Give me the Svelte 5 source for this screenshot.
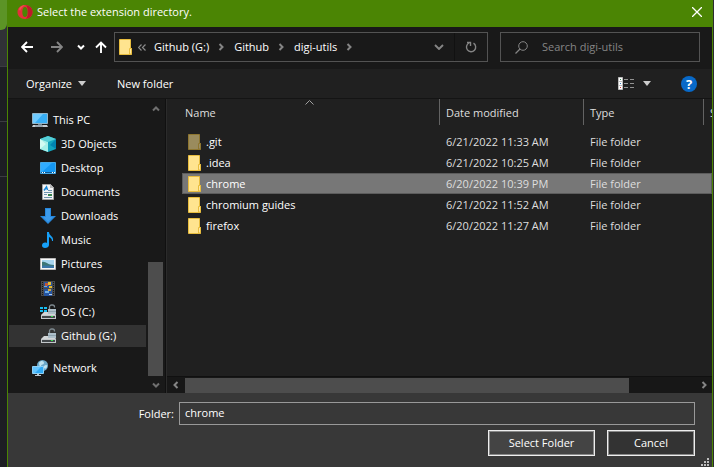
<script>
  let folder = $state('chrome');
  let search = $state('');
  let selected = $state('chrome');

  const crumbs = ['Github (G:)', 'Github', 'digi-utils'];

  const places = [
    { name: 'This PC', icon: 'pc', root: true },
    { name: '3D Objects', icon: 'cube' },
    { name: 'Desktop', icon: 'desktop' },
    { name: 'Documents', icon: 'doc' },
    { name: 'Downloads', icon: 'down' },
    { name: 'Music', icon: 'music' },
    { name: 'Pictures', icon: 'picture' },
    { name: 'Videos', icon: 'video' },
    { name: 'OS (C:)', icon: 'osdrive' },
    { name: 'Github (G:)', icon: 'drive', current: true },
    { name: 'Network', icon: 'network', root: true, apart: true }
  ];

  const files = [
    { name: '.git', date: '6/21/2022 11:33 AM', hidden: true },
    { name: '.idea', date: '6/21/2022 10:25 AM' },
    { name: 'chrome', date: '6/20/2022 10:39 PM' },
    { name: 'chromium guides', date: '6/21/2022 11:52 AM' },
    { name: 'firefox', date: '6/20/2022 11:27 AM' }
  ];

  function pick(name) {
    selected = name;
    folder = name;
  }
</script>

{#snippet folderIcon(dim)}
  <svg class="folder" class:dim width="13" height="16" viewBox="0 0 13 16" aria-hidden="true">
    <path d="M.5.5h11v9h1v6H.5z" fill="#ffe48f" stroke="#e8bd3e" />
    <path d="M10.500 15V9.500h2V15z" fill="#ffe9a3" stroke="#e8bd3e" />
  </svg>
{/snippet}

{#snippet chevron(dir)}
  <svg class="chev to-{dir}" width="8" height="8" viewBox="0 0 8 8" aria-hidden="true">
    <path d="M1 2.500 4 5.500 7 2.500" fill="none" stroke="currentColor" stroke-width="2" />
  </svg>
{/snippet}

{#snippet driveBody()}
  <path d="M9.500 5V2.500a2 2 0 0 1 2-2h1a2 2 0 0 1 2 2V3" fill="none" stroke="#7f8a90" stroke-width="1.300" transform="translate(0 .5)" />
  <path d="M4 8h10l2 3H1z" fill="#d3d6d8" />
  <path d="M8 5h8v5H8z" fill="#aebfc9" />
  <path d="M8 7h8v1H8z" fill="#8fa3ae" />
  <path d="M1 11h15v4H1z" fill="#c3c7ca" />
  <path d="M2 12h13v2H2z" fill="#43484b" />
  <path d="M11 12h2v1h-2z" fill="#35e04c" />
{/snippet}

{#snippet placeIcon(kind)}
  <svg width="16" height="16" viewBox="0 0 16 16" aria-hidden="true">
    {#if kind === 'pc'}
      <path d="M.5 1.500h15v10H.5z" fill="#37aef5" stroke="#91b5c9" />
      <path d="M1 2h10L3 11H1z" fill="#6fcbff" />
      <path d="M6 12h4v1H6z" fill="#6f8491" />
      <path d="M1 13h14l1 2H0z" fill="#c5ccd3" />
      <path d="M3 14h8" stroke="#70818d" />
    {:else if kind === 'cube'}
      <path d="M8 0l8 3v10l-8 3-8-3V3z" fill="#12a4bd" />
      <path d="M0 3l8-3 8 3-8 3z" fill="#56cfd6" />
      <path d="M0 3l8 3v10l-8-3z" fill="#a6f0e8" />
      <path d="M0 3l6 5-6 5z" fill="#d2fbf2" />
      <path d="M16 3l-6 6 6 4z" fill="#0083b0" />
    {:else if kind === 'desktop'}
      <path d="M.5 2.500h15v11H.5z" fill="#1497f2" stroke="#46a9e6" />
      <path d="M1 3h11L2 12H1z" fill="#30acff" />
      <path d="M1 12h14v1H1z" fill="#0c5792" />
      <path d="M2 12.500h1m1 0h1m7 0h1m1 0h1" stroke="#fff" />
    {:else if kind === 'doc'}
      <path d="M2.500.5h8l3 3v12h-11z" fill="#f5f5f5" stroke="#a3a3a3" />
      <path d="M10 0v4h4z" fill="#b7b7b7" />
      <path d="M4 6.500 6.500 3l1 3" fill="none" stroke="#1687d9" stroke-width="1.500" />
      <path d="M8 6.500h4M4 8.500h8M4 13.500h8" stroke="#6d93ae" />
      <path d="M4 10.500h3" stroke="#6d93ae" />
      <path d="M8 10h4v2H8z" fill="#35814c" />
    {:else if kind === 'down'}
      <path d="M5 0h6v8h5l-8 8-8-8h5z" fill="#2787dc" />
      <path d="M6 1h4v8h3l-5 5-5-5h3z" fill="#3c9bea" />
    {:else if kind === 'music'}
      <path d="M7 0h2c0 4 5 4 4 9h-1c0-2-1-3-3-4v8c0 2-2 3-4 3s-3-1-3-2.500C2 11 4.500 10 7 11z" fill="#16a0f8" />
    {:else if kind === 'picture'}
      <path d="M.5 2.500h15v11H.5z" fill="#f7f7f7" stroke="#b8b8b8" />
      <path d="M2 4h12v8H2z" fill="#a8d5ef" />
      <path d="M2 6c4-1 5 3 12 3v3H2z" fill="#3d7778" />
      <path d="M2 10c4-1 8 0 12 0v2H2z" fill="#3a76a9" />
    {:else if kind === 'video'}
      <path d="M1 1h14v15H1z" fill="#4a4a4a" />
      <path d="M2.500 2v14M13.500 2v14" stroke="#151515" stroke-dasharray="1 1" stroke-width="1" />
      <path d="M4 2h8v6H4zM4 9h8v7H4z" fill="#2554a0" />
      <path d="M5 3h3v3H5z" fill="#bc573c" />
      <path d="M8 2h3v3H8zM9 6h3v2H9z" fill="#e7b92c" />
      <path d="M4 6h3v1H4zM5 11h4v2H5z" fill="#6dabe3" />
      <path d="M8 9h3v2H8z" fill="#d7a83b" />
      <path d="M9 14h3v1H9z" fill="#b3cdec" />
    {:else if kind === 'osdrive'}
      {@render driveBody()}
      <path d="M0 3h3v2H0zM4 3h3v2H4zM0 6h3v2H0zM4 6h3v2H4z" fill="#16bdf2" />
    {:else if kind === 'drive'}
      {@render driveBody()}
    {:else}
      <circle cx="10.500" cy="5.500" r="5.500" fill="#6ca9c9" />
      <path d="M7 3c2-3 5-2 5 0s-3 1-3 3-2 0-2-3zM12 6c2-2 4-1 3 1s-2 2-3 1z" fill="#bfe3ef" />
      <path d="M.5 6.500h11v7H.5z" fill="#2fa9f4" stroke="#90d1f5" />
      <path d="M1 7h8l-6 6H1z" fill="#63c4ff" />
      <path d="M5 14h2v1h2v1H3v-1h2z" fill="#bcc8d0" />
    {/if}
  </svg>
{/snippet}

<div class="screen">
  <div class="behind left"><i class="tab"></i><i class="bar"></i><i class="box"></i><i class="box"></i></div>

  <main class="dialog">
    <header class="title">
      <svg width="16" height="16" viewBox="0 0 16 16" aria-hidden="true">
        <path fill-rule="evenodd" d="M8 1c4.500 0 7.500 3 7.500 7s-3 7-7.500 7S.5 12 .5 8 3.500 1 8 1zm0 2C6.400 3 5.300 5 5.300 8s1.100 5 2.700 5 2.700-2 2.700-5S9.600 3 8 3z" fill="#e4303a" />
        <path d="M9 1.200c4 .4 6.500 3.300 6.500 6.800S13 14.400 9 14.800c2.600-3 2.600-10.600 0-13.600z" fill="#bd1a2a" />
        <path d="M2 5c1.500-3 4-4 6-4-2.500 1.500-4 3.500-5 6z" fill="#f3504e" />
      </svg>
      <h1>Select the extension directory.</h1>
      <button class="close" aria-label="Close">
        <svg width="10" height="10" viewBox="0 0 10 10"><path d="M0 0l10 10M10 0 0 10" stroke="#fff" stroke-width="1.300" /></svg>
      </button>
    </header>

    <div class="address">
      <div class="travel">
        <button aria-label="Back"><svg width="12" height="12" viewBox="0 0 12 12"><path d="M12 6H1.500M6 1 1 6l5 5" fill="none" stroke="#fff" stroke-width="1.900" /></svg></button>
        <button aria-label="Forward"><svg width="12" height="12" viewBox="0 0 12 12"><path d="M0 6h10.500M6 1l5 5-5 5" fill="none" stroke="#858585" stroke-width="1.900" /></svg></button>
        <button class="recent" aria-label="Recent locations">{@render chevron('down')}</button>
        <button aria-label="Up"><svg width="12" height="12" viewBox="0 0 12 12"><path d="M6 12V1.500M1 6.500l5-5 5 5" fill="none" stroke="#fff" stroke-width="1.900" /></svg></button>
      </div>
      <div class="crumbs">
        {@render folderIcon(false)}
        <svg class="more" width="8" height="7" viewBox="0 0 8 7" aria-hidden="true"><path d="M3.500.5l-3 3 3 3M7.500.5l-3 3 3 3" fill="none" stroke="#8b8b8b" stroke-width="1.200" /></svg>
        {#each crumbs as crumb}
          <button class="crumb">{crumb}</button>
          {@render chevron('right')}
        {/each}
        <button class="history" aria-label="Previous locations">
          <svg width="10" height="6" viewBox="0 0 10 6"><path d="M1 1l4 4 4-4" fill="none" stroke="#858585" stroke-width="1.900" /></svg>
        </button>
        <button class="refresh" aria-label="Refresh">
          <svg width="12" height="12" viewBox="0 0 12 12"><path d="M8.500 2.200A4.600 4.600 0 1 1 4 2M2 1.500h3.500V5" fill="none" stroke="#858585" stroke-width="1.400" /></svg>
        </button>
      </div>
      <label class="search">
        <svg width="13" height="13" viewBox="0 0 13 13" aria-hidden="true"><circle cx="8" cy="5" r="4.300" fill="none" stroke="#858585" /><path d="M5 8 .5 12.500" stroke="#858585" stroke-width="1.200" /></svg>
        <input type="search" placeholder="Search digi-utils" aria-label="Search digi-utils" bind:value={search} />
      </label>
    </div>

    <div class="tools">
      <button class="organize">Organize <i class="caret"></i></button>
      <button>New folder</button>
      <button class="view" aria-label="Change your view">
        <svg width="16" height="13" viewBox="0 0 16 13"><path d="M.5.5h4v12h-4zM.5 4.500h4M.5 8.500h4" fill="#fff" stroke="#bdbdbd" /><path d="M2 2h1v1H2z" fill="#3d8f58" /><path d="M2 6h1v1H2z" fill="#397fc0" /><path d="M2 10h1v1H2z" fill="#ca3030" /><path d="M6 2.500h4m2 0h4m-10 4h4m2 0h4m-10 4h4m2 0h4" stroke="#929292" /></svg>
        <i class="caret"></i>
      </button>
      <button class="help" aria-label="Help">?</button>
    </div>

    <div class="body">
      <nav aria-label="Places">
        <ul>
          {#each places as place}
            <li class:apart={place.apart}>
              <a href="#{place.icon}" class:root={place.root} class:current={place.current}>
                {@render placeIcon(place.icon)}{place.name}
              </a>
            </li>
          {/each}
        </ul>
        <div class="vscroll">
          {@render chevron('up')}
          <div class="vtrack"><div class="vthumb"></div></div>
          {@render chevron('down')}
        </div>
      </nav>

      <section class="list">
        <div class="files">
          <table>
            <thead>
              <tr>
                <th class="name"><span>Name</span>
                  <svg class="sort" width="9" height="5" viewBox="0 0 9 5" aria-hidden="true"><path d="M.5 4.500l4-4 4 4" fill="none" stroke="#a0a0a0" /></svg>
                </th>
                <th class="date"><span>Date modified</span></th>
                <th class="type"><span>Type</span></th>
                <th class="size"><span>Size</span></th>
              </tr>
            </thead>
            <tbody>
              {#each files as file}
                <tr class:selected={selected === file.name} onclick={() => pick(file.name)}>
                  <td class="file"><div>{@render folderIcon(file.hidden)}{file.name}</div></td>
                  <td>{file.date}</td>
                  <td>File folder</td>
                  <td></td>
                </tr>
              {/each}
            </tbody>
          </table>
        </div>
        <div class="hscroll">
          {@render chevron('left')}
          <div class="htrack"><div class="hthumb"></div></div>
          {@render chevron('right')}
        </div>
      </section>
    </div>

    <footer>
      <div class="field">
        <label for="folder">Folder:</label>
        <input id="folder" type="text" bind:value={folder} />
      </div>
      <div class="actions">
        <button class="primary">Select Folder</button>
        <button>Cancel</button>
      </div>
      <svg class="grip" width="8" height="8" viewBox="0 0 8 8" aria-hidden="true"><path d="M6 0h2v2H6zM3 3h2v2H3zM6 3h2v2H6zM0 6h2v2H0zM3 6h2v2H3zM6 6h2v2H6z" fill="#bdbdbd" /></svg>
    </footer>
  </main>

  <div class="behind right"></div>
</div>

<style>
  :global(body) {
    background: #1c1d22;
  }
  .screen {
    display: flex;
    min-height: 100vh;
    color: #fff;
    font: 11px/16px 'Open Sans', 'Noto Sans', sans-serif;
  }
  .screen * {
    box-sizing: border-box;
  }
  button,
  input {
    margin: 0;
    padding: 0;
    border: 0;
    background: none;
    color: inherit;
    font: inherit;
  }
  svg {
    display: block;
    flex: none;
  }

  .behind {
    display: flex;
    flex-direction: column;
    background: #1d1e23;
  }
  .left {
    width: 7px;
  }
  .left i {
    border-bottom: 1px solid #3c3d42;
  }
  .left .tab {
    height: 30px;
    border: 0;
    border-bottom-right-radius: 6px;
    background: #5c9426;
    box-shadow: 0 6px #303136;
  }
  .bar {
    height: 37px;
    background: #303136;
  }
  .box {
    height: 55px;
  }
  .right {
    width: 1px;
    background: #2b2c31;
  }

  .dialog {
    display: flex;
    flex: 1;
    flex-direction: column;
    min-width: 0;
    border: solid #4b8504;
    border-width: 0 1px;
    background: #202020;
  }
  .title {
    display: flex;
    align-items: center;
    height: 27px;
    padding: 0 10px 4px 9px;
    background: #4b8504;
  }
  h1 {
    flex: 1;
    margin: 0 0 0 4px;
    font-size: 11px;
    font-weight: 400;
  }

  .address {
    display: flex;
    align-items: center;
    height: 42px;
    padding: 0 12px 2px 13px;
    background: #191919;
  }
  .travel {
    display: flex;
    align-items: center;
    gap: 18px;
    margin-right: 7px;
  }
  .recent {
    margin: 0 -8px 0 -4px;
  }
  .crumbs,
  .search {
    display: flex;
    align-items: center;
    height: 30px;
    border: 1px solid #535353;
  }
  .crumbs {
    flex: 2;
    padding-left: 4px;
    color: #858585;
  }
  .more {
    margin: 0 8px 0 6px;
  }
  .crumb {
    margin-right: 8px;
    color: #fff;
    white-space: nowrap;
  }
  .crumbs .chev {
    margin-right: 9px;
  }
  .history {
    margin: 0 10px 0 auto;
  }
  .refresh {
    display: flex;
    align-items: center;
    height: 28px;
    padding: 0 10px;
    border-left: 1px solid #111;
  }
  .search {
    flex: 1;
    gap: 14px;
    margin-left: 12px;
    padding-left: 14px;
  }
  .search input {
    flex: 1;
    min-width: 0;
    outline: 0;
  }
  .search input::placeholder {
    color: #858585;
    opacity: 1;
  }

  .tools {
    display: flex;
    align-items: center;
    height: 30px;
    padding: 0 15px 0 18px;
    border-bottom: 1px solid #141414;
  }
  .caret {
    width: 0;
    border: 4px solid transparent;
    border-top: 5px solid #ccc;
    border-bottom: 0;
  }
  .organize {
    display: flex;
    align-items: center;
    gap: 6px;
    margin-right: 31px;
  }
  .view {
    display: flex;
    align-items: center;
    gap: 9px;
    margin: 0 30px 0 auto;
  }
  .help {
    width: 16px;
    height: 16px;
    border-radius: 50%;
    background: #0869c8;
    font-size: 13px;
    font-weight: 700;
  }

  .body {
    display: flex;
    flex: 1;
  }
  nav {
    display: flex;
    width: 158px;
    border-right: 1px solid #101010;
    background: #191919;
  }
  ul {
    flex: 1;
    margin: 0;
    padding: 9px 0 12px 1px;
    list-style: none;
  }
  li {
    padding: 1px 0;
  }
  .apart {
    margin-top: 8px;
  }
  nav a {
    display: flex;
    align-items: center;
    gap: 5px;
    height: 22px;
    padding-left: 31px;
    color: inherit;
    text-decoration: none;
    white-space: nowrap;
  }
  nav a.root {
    padding-left: 23px;
  }
  nav .current {
    background: #333;
  }
  .vscroll {
    display: flex;
    flex-direction: column;
    align-items: center;
    width: 15px;
    margin: 0 2px;
    padding: 6px 0 4px;
    color: #707070;
  }
  .vtrack {
    display: flex;
    flex: 1;
    flex-direction: column;
    justify-content: flex-end;
    align-self: stretch;
    margin: 4px 0 5px;
  }
  .vthumb {
    height: 44%;
    background: #4d4d4d;
  }
  .chev {
    flex: none;
  }
  .to-up {
    transform: rotate(180deg);
  }
  .to-left {
    transform: rotate(90deg);
  }
  .to-right {
    transform: rotate(-90deg);
  }

  .list {
    display: flex;
    flex: 1;
    flex-direction: column;
    min-width: 0;
    border-left: 1px solid #2b2b2b;
  }
  .files {
    flex: 1;
    padding-left: 15px;
    overflow: hidden;
  }
  table {
    width: 100%;
    border-collapse: collapse;
    table-layout: fixed;
  }
  th {
    position: relative;
    height: 32px;
    padding: 0;
    color: #dedede;
    font-weight: 400;
    text-align: left;
    vertical-align: top;
    overflow: hidden;
  }
  th span {
    display: block;
    height: 26px;
    padding: 6px 0 0 6px;
    border-left: 1px solid #636363;
  }
  .name span {
    padding-left: 2px;
    border-left-color: transparent;
  }
  .sort {
    position: absolute;
    top: 1px;
    left: calc(50% - 6px);
  }
  .date {
    width: 144px;
  }
  .type {
    width: 120px;
  }
  .size {
    width: 9px;
  }
  td {
    height: 21px;
    padding: 0 0 0 7px;
    color: #dedede;
    white-space: nowrap;
  }
  .file {
    padding-left: 6px;
    color: #fff;
  }
  .file div {
    display: flex;
    align-items: center;
    gap: 5px;
  }
  .dim {
    opacity: 0.55;
  }
  .selected {
    background: #777;
    box-shadow: inset 0 0 0 1px #5c5c5c;
  }

  .hscroll {
    display: flex;
    align-items: center;
    height: 17px;
    padding: 0 4px 0 5px;
    border-top: 1px solid #101010;
    background: #171717;
    color: #858585;
  }
  .htrack {
    flex: 1;
    margin: 0 5px;
  }
  .hthumb {
    width: 87%;
    height: 15px;
    background: #4d4d4d;
  }

  footer {
    position: relative;
    padding: 9px 17px 11px;
    background: #383838;
  }
  .field,
  .actions {
    display: flex;
    align-items: center;
  }
  .field label {
    width: 149px;
    margin-right: 5px;
    text-align: right;
  }
  .field input {
    flex: 1;
    min-width: 0;
    height: 23px;
    padding: 0 5px 2px;
    border: 1px solid #999;
    outline: 0;
  }
  .actions {
    justify-content: flex-end;
    gap: 12px;
    margin-top: 5px;
  }
  .actions button {
    width: 88px;
    height: 26px;
    border: 1px solid #eee;
    background: #333;
    box-shadow: inset 0 0 0 1px #888;
  }
  .actions .primary {
    width: 107px;
    background: #444;
  }
  .grip {
    position: absolute;
    right: 3px;
    bottom: 1px;
  }
</style>
